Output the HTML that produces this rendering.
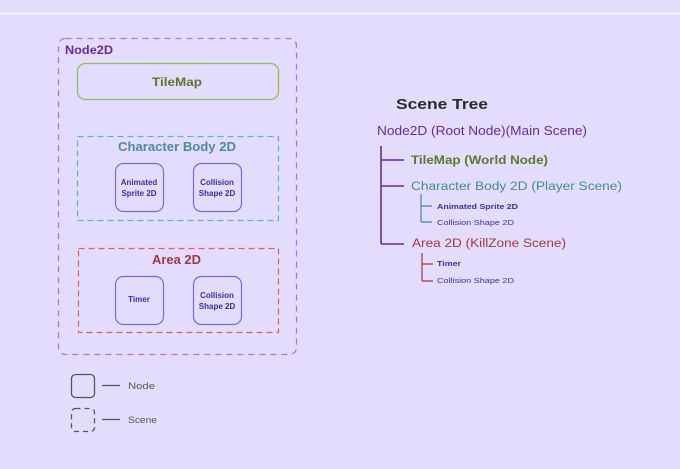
<!DOCTYPE html>
<html><head><style>
html,body{margin:0;padding:0;background:#e4dcfd;}
svg{display:block;font-family:"Liberation Sans","DejaVu Sans",sans-serif;}
</style></head><body>
<svg width="680" height="469" viewBox="0 0 680 469" xmlns="http://www.w3.org/2000/svg">
<rect width="680" height="469" fill="#e4dcfd"/>
<line x1="0" y1="13.5" x2="680" y2="13.5" stroke="#ffffff" stroke-width="1.2"/>
<rect x="58.5" y="38.5" width="238" height="316" rx="7" fill="none" stroke="#b070e0" stroke-width="1.3" stroke-dasharray="6 5"/>
<text x="65" y="54" font-size="12" font-weight="bold" fill="#6a2a9a" textLength="48" lengthAdjust="spacingAndGlyphs">Node2D</text>
<rect x="77.5" y="63.5" width="201" height="36" rx="8" fill="none" stroke="#8cc04a" stroke-width="1.3"/>
<text x="152" y="86" font-size="12" font-weight="bold" fill="#5a7a2a" textLength="50" lengthAdjust="spacingAndGlyphs">TileMap</text>
<rect x="77.5" y="136.5" width="201" height="84" fill="none" stroke="#50b8c8" stroke-width="1.2" stroke-dasharray="6 4"/>
<text x="118" y="151" font-size="12.5" font-weight="bold" fill="#4a8c9a" textLength="118" lengthAdjust="spacingAndGlyphs">Character Body 2D</text>
<rect x="115.5" y="163.5" width="48" height="48" rx="8" fill="none" stroke="#6b6ee0" stroke-width="1.2"/>
<text x="139" y="185" font-size="8" font-weight="bold" fill="#3a2fa0" text-anchor="middle">Animated</text>
<text x="139" y="196" font-size="8" font-weight="bold" fill="#3a2fa0" text-anchor="middle">Sprite 2D</text>
<rect x="193.5" y="163.5" width="48" height="48" rx="8" fill="none" stroke="#6b6ee0" stroke-width="1.2"/>
<text x="217" y="185" font-size="8" font-weight="bold" fill="#3a2fa0" text-anchor="middle">Collision</text>
<text x="217" y="196" font-size="8" font-weight="bold" fill="#3a2fa0" text-anchor="middle">Shape 2D</text>
<rect x="78.5" y="248.5" width="200" height="84" fill="none" stroke="#e06050" stroke-width="1.2" stroke-dasharray="6 4"/>
<text x="152" y="264" font-size="12.5" font-weight="bold" fill="#a03a3a" textLength="49" lengthAdjust="spacingAndGlyphs">Area 2D</text>
<rect x="115.5" y="276.5" width="48" height="48" rx="8" fill="none" stroke="#6b6ee0" stroke-width="1.2"/>
<text x="139" y="302" font-size="8" font-weight="bold" fill="#3a2fa0" text-anchor="middle">Timer</text>
<rect x="193.5" y="276.5" width="48" height="48" rx="8" fill="none" stroke="#6b6ee0" stroke-width="1.2"/>
<text x="217" y="298" font-size="8" font-weight="bold" fill="#3a2fa0" text-anchor="middle">Collision</text>
<text x="217" y="309" font-size="8" font-weight="bold" fill="#3a2fa0" text-anchor="middle">Shape 2D</text>
<rect x="71.5" y="374.5" width="23" height="23" rx="4" fill="none" stroke="#555" stroke-width="1.3"/>
<line x1="102" y1="385.5" x2="120" y2="385.5" stroke="#555" stroke-width="1.3"/>
<text x="128" y="389" font-size="9.5" fill="#555" textLength="27" lengthAdjust="spacingAndGlyphs">Node</text>
<rect x="71.5" y="408.5" width="23" height="23" rx="4" fill="none" stroke="#555" stroke-width="1.3" stroke-dasharray="5 4"/>
<line x1="102" y1="419.5" x2="120" y2="419.5" stroke="#555" stroke-width="1.3"/>
<text x="128" y="423" font-size="9.5" fill="#555" textLength="29" lengthAdjust="spacingAndGlyphs">Scene</text>
<text x="396" y="109" font-size="14.5" font-weight="bold" fill="#2a2a2a" textLength="92" lengthAdjust="spacingAndGlyphs">Scene Tree</text>
<text x="377" y="135" font-size="12.5" fill="#6a2a9a" textLength="210" lengthAdjust="spacingAndGlyphs">Node2D (Root Node)(Main Scene)</text>
<path d="M381 146 V244 M381 160 H404 M381 186 H404 M381 244 H404" stroke="#6a2a9a" stroke-width="1.6" fill="none"/>
<text x="411" y="164" font-size="11.5" font-weight="bold" fill="#5a7a2a" textLength="137" lengthAdjust="spacingAndGlyphs">TileMap (World Node)</text>
<text x="411" y="190" font-size="11.5" fill="#3e8a9a" textLength="211" lengthAdjust="spacingAndGlyphs">Character Body 2D (Player Scene)</text>
<path d="M421 194 V222 M421 206 H432 M421 222 H432" stroke="#3e8a9a" stroke-width="1.2" fill="none"/>
<text x="437" y="209" font-size="7.5" font-weight="bold" fill="#3a2fa0" textLength="81" lengthAdjust="spacingAndGlyphs">Animated Sprite 2D</text>
<text x="437" y="225" font-size="7.5" fill="#3a2fa0" textLength="77" lengthAdjust="spacingAndGlyphs">Collision Shape 2D</text>
<text x="412" y="247" font-size="11.5" fill="#a03a3a" textLength="154" lengthAdjust="spacingAndGlyphs">Area 2D (KillZone Scene)</text>
<path d="M422 253 V281 M422 264 H433 M422 281 H433" stroke="#a03a3a" stroke-width="1.2" fill="none"/>
<text x="437" y="266" font-size="7.5" font-weight="bold" fill="#3a2fa0" textLength="24" lengthAdjust="spacingAndGlyphs">Timer</text>
<text x="437" y="283" font-size="7.5" fill="#3a2fa0" textLength="77" lengthAdjust="spacingAndGlyphs">Collision Shape 2D</text>
</svg>
</body></html>
